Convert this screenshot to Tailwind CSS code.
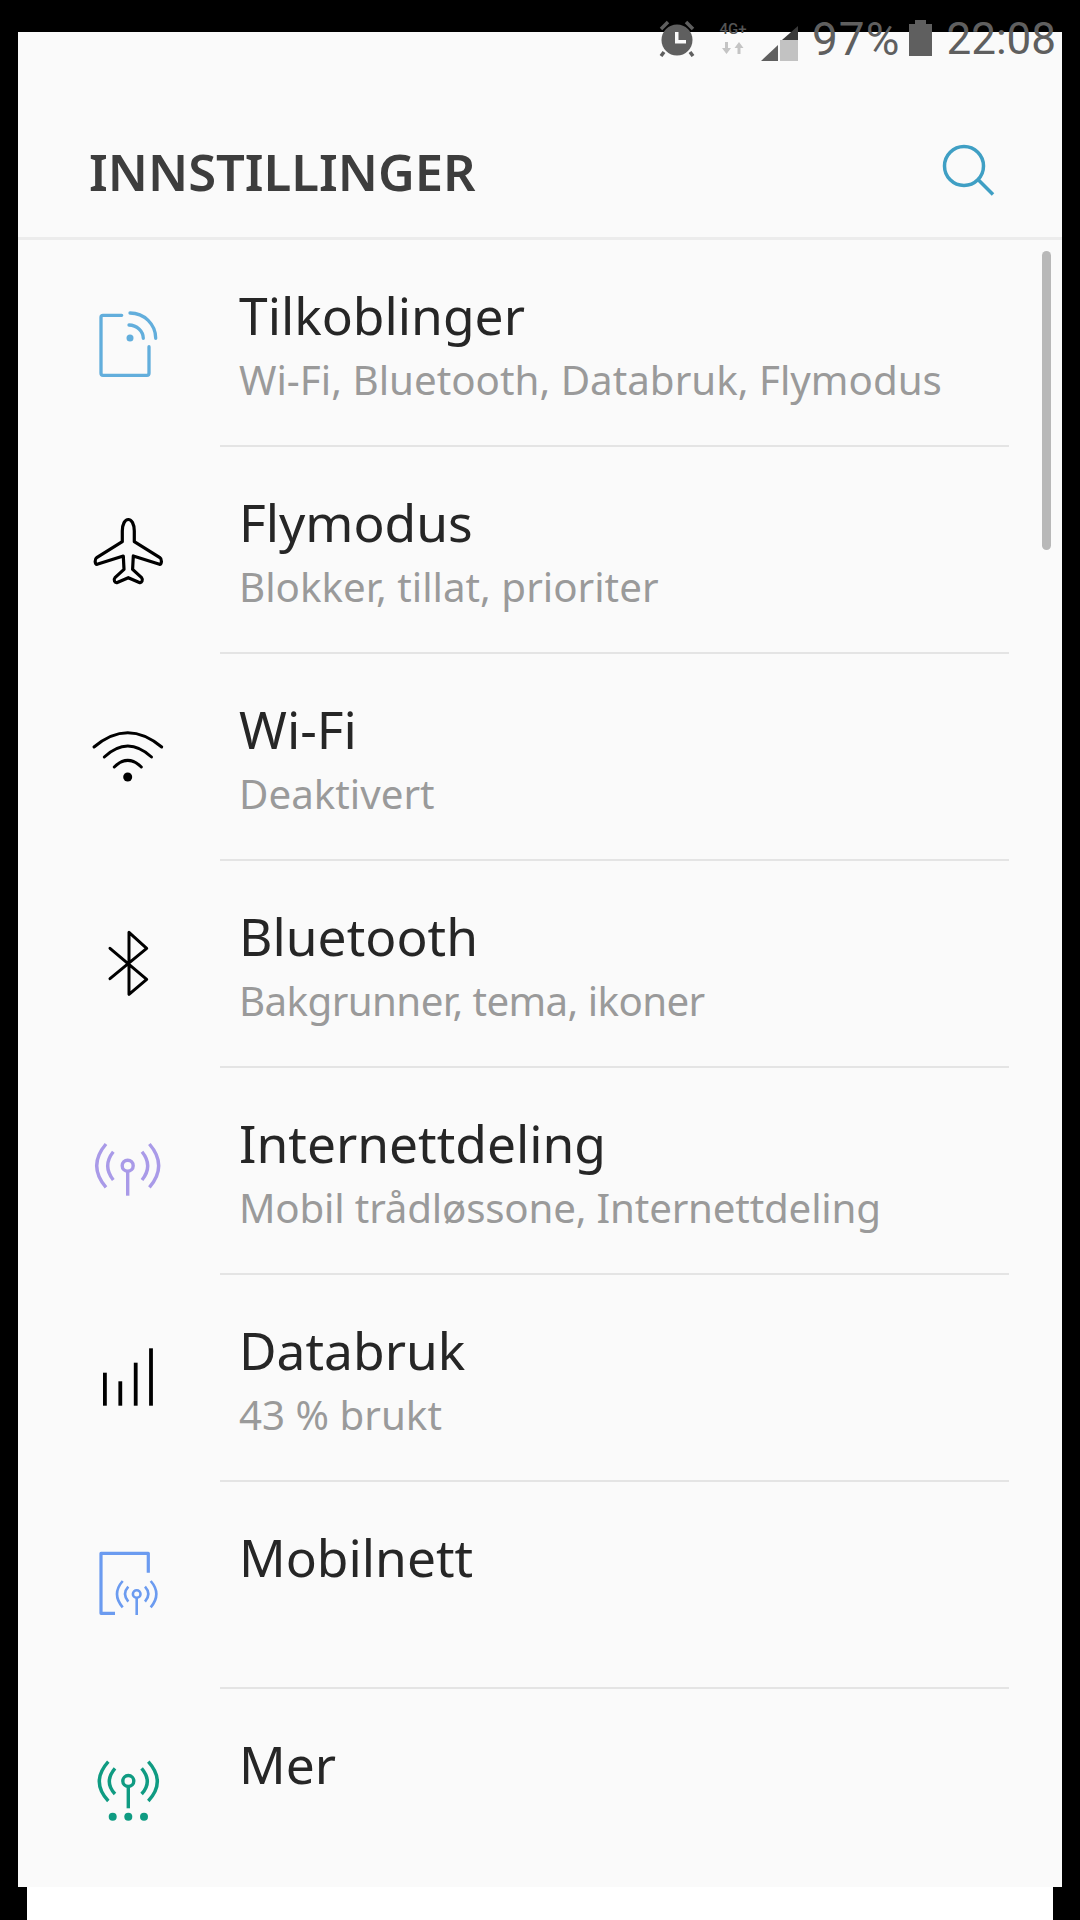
<!DOCTYPE html>
<html lang="en">
<head>
  <meta charset="UTF-8" />
  <meta name="viewport" content="width=device-width, initial-scale=1.0" />
  <title>Innstillinger</title>
  <script src="https://cdn.jsdelivr.net/npm/@tailwindcss/browser@4"></script>
</head>
<body class="bg-black h-[1920px] w-[1080px] overflow-hidden relative font-['Noto_Sans',sans-serif]">

<!-- Status bar -->
<div class="absolute top-[14px] right-[24px] h-[48px] flex items-center text-[#5f5f5f] font-['Roboto',sans-serif] text-[44px] leading-none z-10">
  <svg class="w-[38px] h-[38px] mr-[19px]" viewBox="0 0 38 38" fill="#5f5f5f">
    <circle cx="19" cy="21" r="15.500"/>
    <path d="M3 10 L10 3 M35 10 L28 3 M6 33 L3 37 M32 33 L35 37" stroke="#5f5f5f" stroke-width="3.500"/>
    <path d="M17 13h3.500v8H28v3.500H17z" fill="#fafafa"/>
  </svg>
  <div class="w-[36px] h-[48px] mr-[10px] flex flex-col items-center text-[#555] text-[15px] font-medium leading-none">
    <span class="mt-[8px]">4G+</span>
    <svg class="w-[24px] h-[14px] mt-[4px]" viewBox="0 0 24 14" fill="#c4c4c4"><path d="M4 1h3v6h3l-4.500 6L1 7h3z"/><path d="M18 1l4.500 6h-3v6h-3V7h-3z"/></svg>
  </div>
  <svg class="w-[38px] h-[38px] mr-[13px] mt-[8px]" viewBox="0 0 38 38">
    <path d="M37 3V17H21Z" fill="#3a3a3a"/>
    <path d="M19 17H37V38H19Z" fill="#c2c2c2"/>
    <path d="M0 38L17 22V38Z" fill="#5f5f5f"/>
  </svg>
  <span class="text-[46px] tracking-[1px] mt-[2px]">97%</span>
  <svg class="w-[23px] h-[36px] ml-[9px] mr-[14px]" viewBox="0 0 23 36" fill="#5f5f5f"><path d="M6 0h11v4h6v32H0V4h6z"/></svg>
  <span class="mt-[2px]">22:08</span>
</div>

<!-- Settings panel -->
<div class="relative mt-[32px] mx-[18px] h-[1855px] bg-[#fafafa] overflow-hidden">
  <header class="h-[208px] flex items-center justify-between pt-[72px] pl-[71px] pr-[62px] border-b-[3px] border-[#ececec]">
    <h1 class="text-[50.700px] font-semibold text-[#3d3d3d] leading-none mt-[3px]">INNSTILLINGER</h1>
    <svg class="w-[60px] h-[60px] mt-[-4px]" viewBox="0 0 60 60" fill="none" stroke="#3f9fc4" stroke-width="3.500">
      <circle cx="24" cy="27" r="19.500"/>
      <path d="M38.500 41 L53 55.500"/>
    </svg>
  </header>

  <!-- Scrollbar -->
  <div class="absolute top-[219px] left-[1024px] w-[9px] h-[299px] rounded-full bg-[#b8b8b8]"></div>

  <!-- Tilkoblinger -->
  <div class="h-[207px] flex items-center pl-[70px]">
    <svg class="w-[80px] h-[80px] shrink-0" viewBox="0 0 80 80" fill="none" stroke="#62aedc" stroke-width="3.300" stroke-linecap="round" stroke-linejoin="round">
      <path d="M33.700 11.300H15a2 2 0 0 0-2 2V69.300a2 2 0 0 0 2 2H59a2 2 0 0 0 2-2V42.700"/>
      <path d="M42 9A25.700 25.300 0 0 1 67.700 34.300"/>
      <path d="M41 21A14.500 13.500 0 0 1 55.300 34.300"/>
      <circle cx="42" cy="34" r="3.500" fill="#62aedc" stroke="none"/>
    </svg>
    <div class="self-stretch ml-[52px] mr-[53px] flex-1 border-b-2 border-[#e4e4e4] pl-[19px] pt-[43px]">
      <div class="text-[51.500px] leading-[64px] text-[#262626]">Tilkoblinger</div>
      <div class="text-[40.300px] leading-[66px] text-[#9a9a9a]">Wi-Fi, Bluetooth, Databruk, Flymodus</div>
    </div>
  </div>

  <!-- Flymodus -->
  <div class="h-[207px] flex items-center pl-[70px]">
    <svg class="w-[80px] h-[80px] shrink-0" viewBox="0 0 80 80" fill="none" stroke="#000" stroke-width="3.200" stroke-linejoin="round">
      <path d="M34.300 20C34.300 13 37 8.500 40.300 8.500S46.300 13 46.300 20V30.700L71.900 46.700C74 48 74 53.500 71.500 53.300L45.300 45L44.600 58.300L53.600 66.700C55.500 69 53.500 72 51.900 71.700L40.300 66.700L28.700 71.700C27 72 25 69 27 66.700L36 58.300L35.300 45L9.100 53.300C6.600 53.500 6.600 48 8.700 46.700L34.300 30.700Z"/>
    </svg>
    <div class="self-stretch ml-[52px] mr-[53px] flex-1 border-b-2 border-[#e4e4e4] pl-[19px] pt-[43px]">
      <div class="text-[51.500px] leading-[64px] text-[#262626]">Flymodus</div>
      <div class="text-[40.300px] leading-[66px] text-[#9a9a9a]">Blokker, tillat, prioriter</div>
    </div>
  </div>

  <!-- Wi-Fi -->
  <div class="h-[207px] flex items-center pl-[70px]">
    <svg class="w-[80px] h-[80px] shrink-0 mt-[-4px]" viewBox="0 0 80 80" fill="none" stroke="#000" stroke-width="3" stroke-linecap="round">
      <path d="M6 31Q39.700 2.400 73.700 31"/>
      <path d="M16.300 41Q39.700 19 63.500 41"/>
      <path d="M26.300 51Q39.700 37.600 53.300 51"/>
      <circle cx="39.700" cy="61" r="4.500" fill="#000" stroke="none"/>
    </svg>
    <div class="self-stretch ml-[52px] mr-[53px] flex-1 border-b-2 border-[#e4e4e4] pl-[19px] pt-[43px]">
      <div class="text-[51.500px] leading-[64px] text-[#262626]">Wi-Fi</div>
      <div class="text-[40.300px] leading-[66px] text-[#9a9a9a]">Deaktivert</div>
    </div>
  </div>

  <!-- Bluetooth -->
  <div class="h-[207px] flex items-center pl-[70px]">
    <svg class="w-[80px] h-[80px] shrink-0 mt-[-3px]" viewBox="0 0 80 80" fill="none" stroke="#000" stroke-width="3" stroke-linecap="round" stroke-linejoin="round">
      <path d="M22 25.300L58.700 56.300L41 71.300V9.300L58.700 25.300L22 55.700"/>
    </svg>
    <div class="self-stretch ml-[52px] mr-[53px] flex-1 border-b-2 border-[#e4e4e4] pl-[19px] pt-[43px]">
      <div class="text-[51.500px] leading-[64px] text-[#262626]">Bluetooth</div>
      <div class="text-[40.300px] leading-[66px] tracking-[-0.6px] text-[#9a9a9a]">Bakgrunner, tema, ikoner</div>
    </div>
  </div>

  <!-- Internettdeling -->
  <div class="h-[207px] flex items-center pl-[70px]">
    <svg class="w-[80px] h-[80px] shrink-0 mt-[-6px]" viewBox="0 0 80 80" fill="none" stroke="#a99ae8" stroke-width="3.400">
      <circle cx="39.700" cy="36.700" r="5.500"/>
      <path d="M39.700 42V66.700"/>
      <path d="M18 15Q-0.600 36.700 18 58.300"/>
      <path d="M25.300 22.700Q14.100 36.700 25.300 51"/>
      <path d="M61.400 15Q80 36.700 61.400 58.300"/>
      <path d="M54 22.700Q65.400 36.700 54 51"/>
    </svg>
    <div class="self-stretch ml-[52px] mr-[53px] flex-1 border-b-2 border-[#e4e4e4] pl-[19px] pt-[43px]">
      <div class="text-[51.500px] leading-[64px] text-[#262626]">Internettdeling</div>
      <div class="text-[40.300px] leading-[66px] tracking-[-0.2px] text-[#9a9a9a]">Mobil trådløssone, Internettdeling</div>
    </div>
  </div>

  <!-- Databruk -->
  <div class="h-[207px] flex items-center pl-[70px]">
    <svg class="w-[80px] h-[80px] shrink-0 mt-[-3px]" viewBox="0 0 80 80" fill="#000">
      <rect x="15" y="35.700" width="3.800" height="33"/>
      <rect x="30.400" y="44.300" width="3.800" height="24.400"/>
      <rect x="45.800" y="25.700" width="3.800" height="43"/>
      <rect x="61.100" y="11.300" width="3.800" height="57.400"/>
    </svg>
    <div class="self-stretch ml-[52px] mr-[53px] flex-1 border-b-2 border-[#e4e4e4] pl-[19px] pt-[43px]">
      <div class="text-[51.500px] leading-[64px] text-[#262626]">Databruk</div>
      <div class="text-[40.300px] leading-[66px] text-[#9a9a9a]">43 % brukt</div>
    </div>
  </div>

  <!-- Mobilnett -->
  <div class="h-[207px] flex items-center pl-[70px]">
    <svg class="w-[80px] h-[80px] shrink-0 mt-[-4px]" viewBox="0 0 80 80" fill="none" stroke="#6b9bf0" stroke-width="3.200" stroke-linejoin="round">
      <path d="M60.300 28.700V9.300H13V69.300H27"/>
      <g stroke-width="2.600">
        <circle cx="48.700" cy="50" r="3.800"/>
        <path d="M48.700 54V71"/>
        <path d="M34.700 37Q23.300 50 34.700 63.300"/>
        <path d="M40.300 42.700Q33.700 50 40.300 57.700"/>
        <path d="M62.700 37Q74 50 62.700 63.300"/>
        <path d="M57 42.700Q63.700 50 57 57.700"/>
      </g>
    </svg>
    <div class="self-stretch ml-[52px] mr-[53px] flex-1 border-b-2 border-[#e4e4e4] pl-[19px] pt-[43px]">
      <div class="text-[51.500px] leading-[64px] text-[#262626]">Mobilnett</div>
    </div>
  </div>

  <!-- Mer -->
  <div class="h-[207px] flex items-center pl-[70px]">
    <svg class="w-[80px] h-[80px] shrink-0 mt-[-4px]" viewBox="0 0 80 80" fill="none" stroke="#0f9b82" stroke-width="3.400">
      <circle cx="40.300" cy="30" r="5.500"/>
      <path d="M40.300 35V57.300"/>
      <path d="M20.300 10.700Q2.300 30.700 20.300 50"/>
      <path d="M27 17.300Q15.600 30.700 27 43"/>
      <path d="M60.300 10.700Q78.300 30.700 60.300 50"/>
      <path d="M53.600 17.300Q65 30.700 53.600 43"/>
      <g fill="#0f9b82" stroke="none">
        <circle cx="24.700" cy="65.700" r="4"/>
        <circle cx="40.300" cy="65.700" r="4"/>
        <circle cx="56" cy="65.700" r="4"/>
      </g>
    </svg>
    <div class="self-stretch ml-[52px] mr-[53px] flex-1 pl-[19px] pt-[43px]">
      <div class="text-[51.500px] leading-[64px] text-[#262626]">Mer</div>
    </div>
  </div>
</div>

<div class="mx-[27px] h-[33px] bg-white"></div>
</body>
</html>
